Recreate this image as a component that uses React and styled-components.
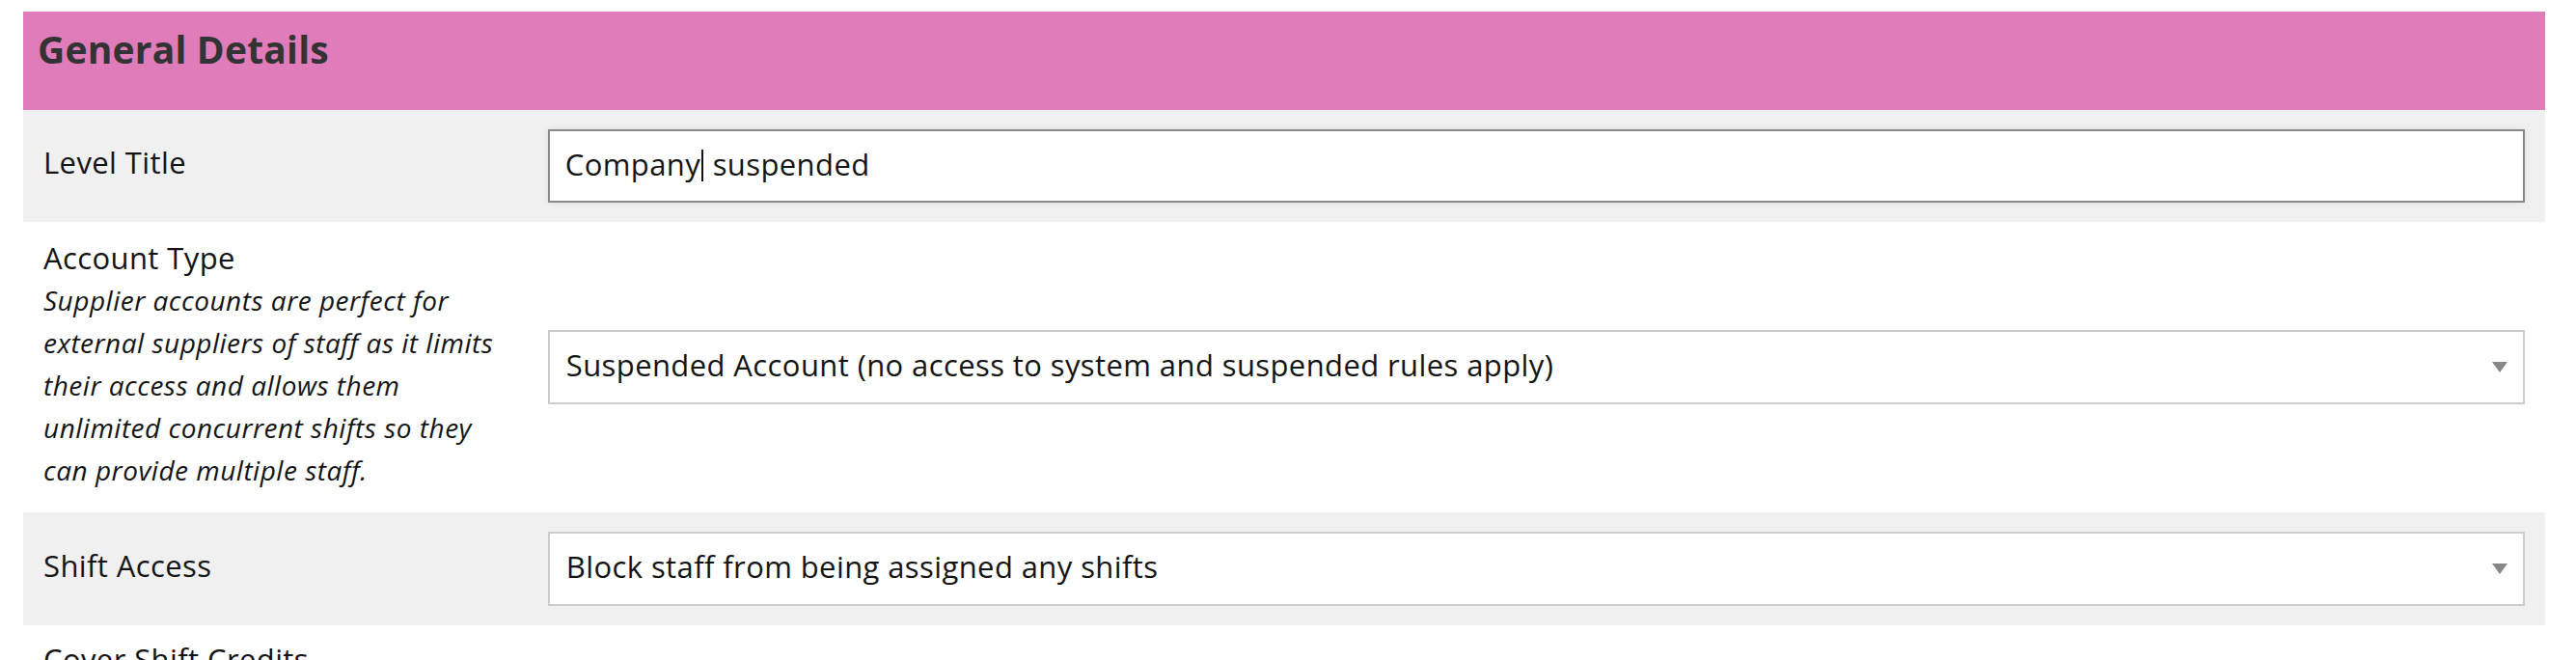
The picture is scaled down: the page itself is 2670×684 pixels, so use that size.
import React from "react";
import styled, { createGlobalStyle } from "styled-components";

const GlobalStyle = createGlobalStyle`
  html, body {
    margin: 0;
    padding: 0;
    background: #ffffff;
  }
  body {
    font-family: "Open Sans", "Liberation Sans", sans-serif;
    color: #141414;
  }
`;

const Page = styled.div`
  padding: 12px 32px 0 24px;
`;

const Section = styled.section`
  display: flex;
  flex-direction: column;
`;

const SectionHeader = styled.header`
  background: #e07cba;
  height: 102px;
  box-sizing: border-box;
  padding: 14px 15px 0;
`;

const SectionTitle = styled.h2`
  margin: 0;
  font-family: "Open Sans", "Liberation Sans", sans-serif;
  font-weight: 700;
  font-size: 39px;
  letter-spacing: 0.2px;
  line-height: 50px;
  color: #333333;
`;

const Row = styled.div`
  display: grid;
  grid-template-columns: 20% 80%;
  background: ${(p) => (p.$shaded ? "#f0f0f0" : "#ffffff")};
`;

const LabelCell = styled.div`
  padding: ${(p) => p.$pad || "16px 21px 24px"};
  display: flex;
  flex-direction: column;
  justify-content: ${(p) => (p.$top ? "flex-start" : "center")};
`;

const Label = styled.div`
  font-size: 31px;
  letter-spacing: 0.4px;
  line-height: 44px;
  font-weight: 400;
  color: #141414;
`;

const Hint = styled.div`
  font-size: 28px;
  letter-spacing: 0.5px;
  line-height: 44px;
  font-style: italic;
  color: #141414;
`;

const FieldCell = styled.div`
  padding: 20px 21px;
  display: flex;
  align-items: center;
`;

const TextBox = styled.div`
  box-sizing: border-box;
  width: 100%;
  height: 76px;
  background: #ffffff;
  border: 2px solid #8a8a8a;
  box-shadow: 0 0 8px rgba(0, 0, 0, 0.08);
  padding: 0 16px 5px;
  display: flex;
  align-items: center;
  font-size: 31px;
  letter-spacing: 0.4px;
  color: #141414;
  white-space: pre;
`;

const Caret = styled.span`
  display: inline-block;
  width: 2px;
  height: 33px;
  background: #141414;
  margin: 3px 1px 0;
`;

const SelectBox = styled.div`
  box-sizing: border-box;
  width: 100%;
  height: 77px;
  background: #ffffff;
  border: 2px solid #cccccc;
  padding: 0 16px 0 17px;
  display: flex;
  align-items: center;
  justify-content: space-between;
  font-size: 31px;
  letter-spacing: 0.4px;
  color: #141414;
`;

const SelectText = styled.span`
  padding-bottom: 5px;
`;

const Arrow = styled.span`
  width: 0;
  height: 0;
  border-left: 8px solid transparent;
  border-right: 8px solid transparent;
  border-top: 11px solid #888888;
`;

function Select({ value }) {
  return (
    <SelectBox>
      <SelectText>{value}</SelectText>
      <Arrow />
    </SelectBox>
  );
}

export default function App() {
  return (
    <>
      <GlobalStyle />
      <Page>
        <Section>
          <SectionHeader>
            <SectionTitle>General Details</SectionTitle>
          </SectionHeader>

          <Row $shaded>
            <LabelCell>
              <Label>Level Title</Label>
            </LabelCell>
            <FieldCell>
              <TextBox>
                Company<Caret />{" suspended"}
              </TextBox>
            </FieldCell>
          </Row>

          <Row>
            <LabelCell $top $pad="15px 21px 22px">
              <Label>Account Type</Label>
              <Hint>
                Supplier accounts are perfect for external suppliers of staff as it
                limits their access and allows them unlimited concurrent shifts so
                they can provide multiple staff.
              </Hint>
            </LabelCell>
            <FieldCell>
              <Select value="Suspended Account (no access to system and suspended rules apply)" />
            </FieldCell>
          </Row>

          <Row $shaded>
            <LabelCell>
              <Label>Shift Access</Label>
            </LabelCell>
            <FieldCell>
              <Select value="Block staff from being assigned any shifts" />
            </FieldCell>
          </Row>

          <Row>
            <LabelCell $top $pad="13px 21px 20px">
              <Label>Cover Shift Credits</Label>
            </LabelCell>
            <FieldCell />
          </Row>
        </Section>
      </Page>
    </>
  );
}
